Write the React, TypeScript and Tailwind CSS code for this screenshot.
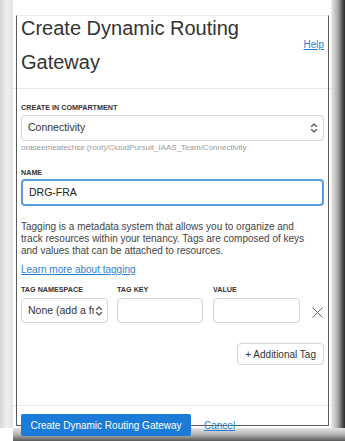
import React from 'react';

const Chevrons = () => (
    <svg width="8" height="12" viewBox="0 0 8 12" fill="none" stroke="#555" strokeWidth="1.2" strokeLinecap="round" strokeLinejoin="round">
        <path d="M1.5 4.5 L4 2 L6.5 4.5" />
        <path d="M1.5 7.5 L4 10 L6.5 7.5" />
    </svg>
);

export default function App() {
    return (
        <div
            className="relative w-[345px] h-[441px] overflow-hidden bg-white text-[#333]"
            style={{ fontFamily: '"Liberation Sans", Arial, sans-serif' }}
        >
            <div className="flex h-[428px]">
                {/* left bevel */}
                <div className="w-[13px] shrink-0 bg-gradient-to-r from-[#d6d6d6] via-[#efefef] to-[#e4e4e4]" />

                {/* main panel */}
                <div className="flex w-[318px] flex-col bg-white">
                    <header className="flex items-center justify-between border-b border-[#e6e6e6] pb-[9px] pl-[8px] pr-[7px] pt-[11px]">
                        <h1 className="text-[20px] leading-[34px] font-normal text-[#333]">
                            Create Dynamic Routing
                            <br />
                            Gateway
                        </h1>
                        <a className="mb-[2px] text-[10px] text-[#2d7fd3] underline">Help</a>
                    </header>

                    <div className="flex flex-1 flex-col border-b border-[#e6e6e6] pl-[8px] pr-[7px] pt-[14px]">
                        <label className="text-[7.2px] leading-[10px] font-semibold text-[#333]">CREATE IN COMPARTMENT</label>
                        <div className="mt-[2px] flex h-[26px] items-center justify-between rounded-[4px] border border-[#d4d4d4] pl-[6px] pr-[5px]">
                            <span className="text-[10.5px] text-[#333]">Connectivity</span>
                            <Chevrons />
                        </div>
                        <p className="mt-[2px] text-[8px] leading-[10px] text-[#9a9a9a]">
                            oraseemeatechse (root)/CloudPursuit_IAAS_Team/Connectivity
                        </p>

                        <label className="mt-[15px] text-[7.2px] leading-[10px] font-semibold text-[#333]">NAME</label>
                        <div className="mt-[1px] flex h-[27px] items-center rounded-[4px] border-2 border-[#5a9ce2] pl-[6px]">
                            <span className="text-[10.5px] text-[#222]">DRG-FRA</span>
                        </div>

                        <p className="mt-[15px] text-[10px] leading-[12px] text-[#444]">
                            Tagging is a metadata system that allows you to organize and
                            <br />
                            track resources within your tenancy. Tags are composed of keys
                            <br />
                            and values that can be attached to resources.
                        </p>
                        <a className="mt-[7px] text-[10px] leading-[12px] text-[#2d7fd3] underline">Learn more about tagging</a>

                        <div className="mt-[9px] flex items-start">
                            <div className="flex w-[87px] flex-col">
                                <span className="text-[7.2px] leading-[10px] font-semibold text-[#333]">TAG NAMESPACE</span>
                                <div className="mt-[3px] flex h-[25px] items-center justify-between overflow-hidden rounded-[4px] border border-[#d4d4d4] pl-[6px] pr-[4px]">
                                    <span className="whitespace-nowrap overflow-hidden text-[10.5px] text-[#333]">None (add a fr</span>
                                    <span className="shrink-0 bg-white pl-[1px]"><Chevrons /></span>
                                </div>
                            </div>
                            <div className="ml-[9px] flex w-[86px] flex-col">
                                <span className="text-[7.2px] leading-[10px] font-semibold text-[#333]">TAG KEY</span>
                                <div className="mt-[3px] h-[25px] rounded-[4px] border border-[#d4d4d4]" />
                            </div>
                            <div className="ml-[10px] flex w-[87px] flex-col">
                                <span className="text-[7.2px] leading-[10px] font-semibold text-[#333]">VALUE</span>
                                <div className="mt-[3px] h-[25px] rounded-[4px] border border-[#d4d4d4]" />
                            </div>
                            <div className="ml-[11px] mt-[21px] flex h-[12px] w-[12px] items-center justify-center">
                                <svg width="11" height="11" viewBox="0 0 11 11" stroke="#666" strokeWidth="1">
                                    <path d="M0.5 0.5 L10.5 10.5 M10.5 0.5 L0.5 10.5" />
                                </svg>
                            </div>
                        </div>

                        <div className="mt-[20px] flex justify-end">
                            <button className="h-[22px] rounded-[4px] border border-[#d4d4d4] bg-white px-[7px] text-[10px] text-[#333]">
                                + Additional Tag
                            </button>
                        </div>
                    </div>

                    <div className="relative z-10 flex h-[22px] items-center gap-[13px] pl-[8px] mt-[8px] mb-[-8px]">
                        <button className="h-[22px] w-[170px] rounded-[2px] bg-[#1a7bd9] text-[10px] text-white">
                            Create Dynamic Routing Gateway
                        </button>
                        <a className="text-[10px] text-[#2d7fd3] underline">Cancel</a>
                    </div>
                </div>

                {/* right bevel */}
                <div className="w-[14px] shrink-0 bg-gradient-to-r from-[#ececec] via-[#a8a8a8] to-[#2a2a2a]" />
            </div>

            {/* bottom bevel */}
            <div className="ml-[13px] h-[13px] w-[332px] bg-gradient-to-b from-[#e4e4e4] via-[#b4b4b4] to-[#5a5a5a]" />

            {/* inner frame line drawn over the panel */}
            <div className="pointer-events-none absolute left-[16px] top-[15px] h-[411px] w-[313px] border border-t-[#ececec] border-l-[#5c5c5c] border-r-[#5c5c5c] border-b-[#5c5c5c]" />
        </div>
    );
}
